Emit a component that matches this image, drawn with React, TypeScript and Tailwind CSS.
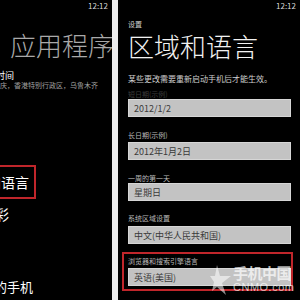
const cjk = "font-['Noto_Sans_CJK_SC','Noto_Sans',sans-serif]"

const fields = [
  { label: '长日期(示例)', value: '2012年1月2日', mt: 'mt-[15px]', gap: 'mt-[3px]' },
  { label: '一周的第一天', value: '星期日', mt: 'mt-[15px]', gap: 'mt-[1px]' },
  { label: '系统区域设置', value: '中文(中华人民共和国)', mt: 'mt-[14px]', gap: 'mt-[4px]' },
]

function ValueBox({ children, className = '' }: { children: React.ReactNode; className?: string }) {
  return (
    <div
      className={`h-[18px] flex items-center pl-[5px] bg-[#c3c3c3] border border-[#d6d6d6] text-[9px] leading-none text-[#3a3a3a] ${className}`}
    >
      {children}
    </div>
  )
}

function LeftScreen() {
  return (
    <div className="w-[112px] h-full overflow-hidden bg-black flex flex-col">
      <div className="pt-[2px] pr-[4px] text-right text-[8px] leading-none text-[#d8d8d8]">12:12</div>
      <div className="mt-[22px] ml-[10px] text-[26px] leading-none font-light text-[#a9a9a9] whitespace-nowrap">
        应用程序
      </div>
      <div className="mt-[13px] ml-[-4px] text-[9px] leading-none text-white whitespace-nowrap">时间</div>
      <div className="mt-[2px] ml-[-7px] text-[7px] leading-none text-[#a0a0a0] whitespace-nowrap">
        重庆，香港特别行政区，乌鲁木齐
      </div>
      {/* 选中的项 */}
      <div className="mt-[76px] ml-[-10px] w-[46px] h-[34px] border-2 border-[#c0262b] flex items-center">
        <span className="ml-[-33px] text-[14px] leading-none text-white whitespace-nowrap">区域和语言</span>
      </div>
      <div className="mt-[8px] ml-[-47px] text-[14px] leading-none text-white whitespace-nowrap">主题色彩</div>
      <div className="mt-[59px] ml-[-45px] text-[13px] leading-none text-white whitespace-nowrap">查找我的手机</div>
    </div>
  )
}

function Watermark() {
  return (
    <div className="absolute left-[92px] top-[262px] flex items-start pointer-events-none">
      <svg width="24" height="36" viewBox="0 0 24 36" className="mt-[1px]">
        <polygon
          points="7,2 10,13 21,13 12,20 16,32 7,24 2,28 4,19 0,13 5,13"
          fill="rgba(255,255,255,0.55)"
        />
      </svg>
      <div className="flex flex-col ml-[-1px]">
        <span className="mt-[3px] text-[15px] leading-none font-bold tracking-[-0.5px] text-white/70 whitespace-nowrap">
          手机中国
        </span>
        <span className="mt-[2px] text-[11px] leading-none tracking-[0.5px] text-white/70 font-['Liberation_Sans',sans-serif]">
          CNMO.com
        </span>
      </div>
    </div>
  )
}

function RightScreen() {
  return (
    <div className="relative flex-1 h-full bg-black flex flex-col pl-[10px] pr-[9px] overflow-hidden">
      <div className="pt-[2px] mr-[-5px] text-right text-[8px] leading-none text-[#d8d8d8]">12:12</div>
      <div className="mt-[11px] text-[7px] leading-none text-[#d0d0d0]">设置</div>
      <div className="mt-[5px] text-[26px] leading-none font-light text-[#f2f2f2] whitespace-nowrap">区域和语言</div>
      <div className="mt-[16px] text-[8px] leading-none text-[#cfcfcf] whitespace-nowrap">
        某些更改需要重新启动手机后才能生效。
      </div>
      <div className="mt-[8px] text-[7px] leading-none text-[#b8b8b8] opacity-30">短日期(示例)</div>
      <ValueBox className="mt-[1px]">2012/1/2</ValueBox>
      {fields.map(f => (
        <div key={f.label} className="flex flex-col">
          <div className={`${f.mt} text-[7px] leading-none text-[#b8b8b8]`}>{f.label}</div>
          <ValueBox className={f.gap}>{f.value}</ValueBox>
        </div>
      ))}
      {/* 浏览器语言 - 红框标注 */}
      <div className="mt-[8px] ml-[-6px] mr-[-2px] border-2 border-[#c0262b] pl-[4px] pr-[0px] pt-[4px] pb-[3px]">
        <div className="text-[7px] leading-none text-[#b8b8b8]">浏览器和搜索引擎语言</div>
        <ValueBox className="mt-[3px]">英语(美国)</ValueBox>
      </div>
      <Watermark />
    </div>
  )
}

export default function App() {
  return (
    <div className={`w-[300px] h-[300px] flex bg-black overflow-hidden ${cjk}`}>
      <LeftScreen />
      <div className="w-[6px] h-full bg-[#ececec]" />
      <RightScreen />
    </div>
  )
}
